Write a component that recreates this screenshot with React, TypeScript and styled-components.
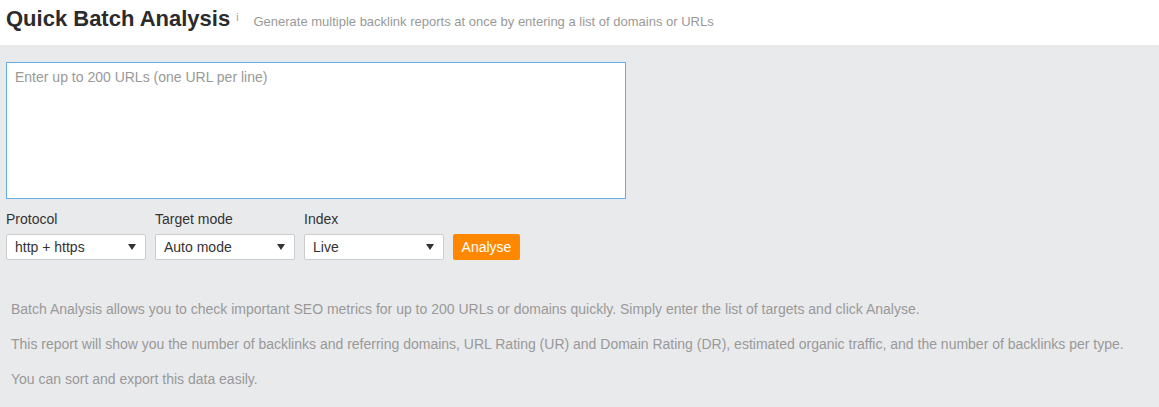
import React from "react";
import styled, { createGlobalStyle } from "styled-components";

const Global = createGlobalStyle`
  html, body { margin: 0; padding: 0; background: #e9eaec; }
  body { font-family: "Liberation Sans", Arial, sans-serif; }
  * { box-sizing: border-box; }
`;

const Page = styled.div`
  width: 1159px;
  min-height: 407px;
  background: #e9eaec;
`;

const Header = styled.header`
  height: 45px;
  background: #fff;
  display: flex;
  align-items: baseline;
  padding: 0 6px;
  padding-top: 4px;
`;

const Title = styled.h1`
  margin: 0;
  font-size: 22px;
  font-weight: bold;
  color: #2b2b2b;
  line-height: 30px;
`;

const Info = styled.sup`
  font-size: 10px;
  color: #999;
  margin-left: 6px;
  position: relative;
  top: -5px;
`;

const Subtitle = styled.span`
  margin-left: 15px;
  font-size: 13px;
  color: #999;
`;

const Main = styled.main`
  padding: 17px 6px 0;
`;

const Area = styled.textarea`
  display: block;
  width: 620px;
  height: 137px;
  border: 1px solid #65aee6;
  background: #fff;
  padding: 6px 8px;
  font-family: "Liberation Sans", Arial, sans-serif;
  font-size: 14px;
  color: #333;
  resize: none;
  outline: none;
  &::placeholder { color: #999; }
`;

const Controls = styled.div`
  display: flex;
  align-items: flex-end;
  gap: 9px;
  margin-top: 12px;
`;

const Field = styled.div`
  display: flex;
  flex-direction: column;
  gap: 7px;
`;

const Label = styled.label`
  font-size: 14px;
  color: #333;
  line-height: 16px;
`;

const Select = styled.div`
  width: 140px;
  height: 26px;
  background: #fff;
  border: 1px solid #ccc;
  border-radius: 2px;
  display: flex;
  align-items: center;
  justify-content: space-between;
  padding: 0 8px 0 8px;
  font-size: 14px;
  color: #333;
`;

const Arrow = styled.span`
  width: 0;
  height: 0;
  border-left: 4px solid transparent;
  border-right: 4px solid transparent;
  border-top: 6px solid #333;
  margin-right: 1px;
`;

const Button = styled.button`
  height: 26px;
  width: 67px;
  padding: 0;
  background: #ff8800;
  color: #fff;
  border: none;
  border-radius: 2px;
  font-family: "Liberation Sans", Arial, sans-serif;
  font-size: 14px;
  cursor: pointer;
`;

const Notes = styled.div`
  padding: 41px 5px 0;
  display: flex;
  flex-direction: column;
  gap: 19px;
`;

const Note = styled.p`
  margin: 0;
  font-size: 14px;
  line-height: 16px;
  color: #999;
`;

const fields = [
  { label: "Protocol", value: "http + https" },
  { label: "Target mode", value: "Auto mode" },
  { label: "Index", value: "Live" },
];

export default function App() {
  return (
    <Page>
      <Global />
      <Header>
        <Title>Quick Batch Analysis</Title>
        <Info>i</Info>
        <Subtitle>Generate multiple backlink reports at once by entering a list of domains or URLs</Subtitle>
      </Header>
      <Main>
        <Area placeholder="Enter up to 200 URLs (one URL per line)" />
        <Controls>
          {fields.map((f) => (
            <Field key={f.label}>
              <Label>{f.label}</Label>
              <Select>
                <span>{f.value}</span>
                <Arrow />
              </Select>
            </Field>
          ))}
          <Button>Analyse</Button>
        </Controls>
        <Notes>
          <Note>Batch Analysis allows you to check important SEO metrics for up to 200 URLs or domains quickly. Simply enter the list of targets and click Analyse.</Note>
          <Note>This report will show you the number of backlinks and referring domains, URL Rating (UR) and Domain Rating (DR), estimated organic traffic, and the number of backlinks per type.</Note>
          <Note>You can sort and export this data easily.</Note>
        </Notes>
      </Main>
    </Page>
  );
}
